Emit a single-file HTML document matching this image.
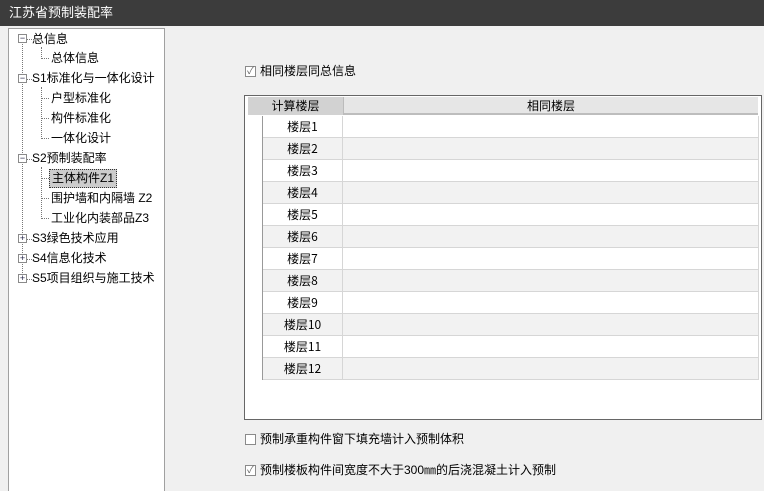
<!DOCTYPE html><html><head><meta charset="utf-8"><style>
*{margin:0;padding:0;box-sizing:border-box}
body{width:764px;height:491px;background:#f0f0f0;font-family:"Liberation Sans","Noto Sans CJK SC",sans-serif;font-size:12px;color:#000;position:relative;overflow:hidden}
.a{position:absolute}
.title{left:0;top:0;width:764px;height:26px;background:#3c3c3c;color:#fff;font-size:13px;line-height:26px;padding-left:9px}
.tree{left:8px;top:28px;width:157px;height:463px;background:#fff;border:1px solid #a0a0a0;border-bottom:none}
.t{position:absolute;white-space:nowrap;font-size:12px;line-height:16px}
.bx{position:absolute;width:9px;height:9px;border:1px solid #8a8a8a;background:#fff;font-size:9px;line-height:7px;text-align:center;color:#224}
.dv{position:absolute;border-left:1px dotted #777}
.dh{position:absolute;border-top:1px dotted #777;width:7px}
.tbl{left:244px;top:95px;width:518px;height:325px;background:#fff;border:1px solid #666}
.row{position:absolute;left:3px;width:510px;height:22px;border-bottom:1px solid #d6d6d6}
.c1{position:absolute;left:15px;width:80px;height:22px;text-align:center;line-height:22px;border-right:1px solid #d6d6d6;font-family:"WenQuanYi Zen Hei","Noto Sans CJK SC",sans-serif}
.cb{position:absolute;width:11px;height:11px;border:1px solid #8a8a8a;background:#fff;font-size:10px;line-height:9px;text-align:center;color:#666}
</style></head><body>
<div class="a title">江苏省预制装配率</div>
<div class="a tree">
<div class="dv" style="left:13px;top:12px;height:242px"></div>
<div class="dv" style="left:32px;top:18px;height:12px"></div>
<div class="dv" style="left:32px;top:58px;height:52px"></div>
<div class="dv" style="left:32px;top:138px;height:52px"></div>
<div class="bx" style="left:9px;top:5px">−</div><div class="dh" style="left:18px;top:10px"></div><div class="t" style="left:23px;top:2px">总信息</div>
<div class="dh" style="left:33px;top:29px"></div><div class="t" style="left:42px;top:21px">总体信息</div>
<div class="bx" style="left:9px;top:45px">−</div><div class="dh" style="left:18px;top:50px"></div><div class="t" style="left:23px;top:41px">S1标准化与一体化设计</div>
<div class="dh" style="left:33px;top:69px"></div><div class="t" style="left:42px;top:61px">户型标准化</div>
<div class="dh" style="left:33px;top:89px"></div><div class="t" style="left:42px;top:81px">构件标准化</div>
<div class="dh" style="left:33px;top:109px"></div><div class="t" style="left:42px;top:101px">一体化设计</div>
<div class="bx" style="left:9px;top:125px">−</div><div class="dh" style="left:18px;top:130px"></div><div class="t" style="left:23px;top:121px">S2预制装配率</div>
<div class="dh" style="left:33px;top:149px"></div><div class="t" style="left:40px;top:140px;background:#ccc;border:1px dotted #333;padding:0 2px;height:19px;line-height:17px">主体构件Z1</div>
<div class="dh" style="left:33px;top:169px"></div><div class="t" style="left:42px;top:161px">围护墙和内隔墙 Z2</div>
<div class="dh" style="left:33px;top:189px"></div><div class="t" style="left:42px;top:181px">工业化内装部品Z3</div>
<div class="bx" style="left:9px;top:205px">+</div><div class="dh" style="left:18px;top:210px"></div><div class="t" style="left:23px;top:201px">S3绿色技术应用</div>
<div class="bx" style="left:9px;top:225px">+</div><div class="dh" style="left:18px;top:230px"></div><div class="t" style="left:23px;top:221px">S4信息化技术</div>
<div class="bx" style="left:9px;top:245px">+</div><div class="dh" style="left:18px;top:250px"></div><div class="t" style="left:23px;top:241px">S5项目组织与施工技术</div>
</div>
<div class="cb" style="left:245px;top:66px">✓</div><div class="a" style="left:260px;top:63px;line-height:16px">相同楼层同总信息</div>
<div class="a tbl">
<div class="a" style="left:3px;top:1px;width:510px;height:18px;background:#e6e6e6;border-bottom:2px solid #bdbdbd"></div>
<div class="a" style="left:3px;top:1px;width:95px;height:18px;background:#d2d2d2;text-align:center;line-height:18px">计算楼层</div>
<div class="a" style="left:98px;top:1px;width:415px;height:18px;text-align:center;line-height:18px;border-left:1px solid #bbb">相同楼层</div>
<div class="row" style="top:20px;background:#fff"><div class="c1">楼层1</div></div>
<div class="row" style="top:42px;background:#f2f2f2"><div class="c1">楼层2</div></div>
<div class="row" style="top:64px;background:#fff"><div class="c1">楼层3</div></div>
<div class="row" style="top:86px;background:#f2f2f2"><div class="c1">楼层4</div></div>
<div class="row" style="top:108px;background:#fff"><div class="c1">楼层5</div></div>
<div class="row" style="top:130px;background:#f2f2f2"><div class="c1">楼层6</div></div>
<div class="row" style="top:152px;background:#fff"><div class="c1">楼层7</div></div>
<div class="row" style="top:174px;background:#f2f2f2"><div class="c1">楼层8</div></div>
<div class="row" style="top:196px;background:#fff"><div class="c1">楼层9</div></div>
<div class="row" style="top:218px;background:#f2f2f2"><div class="c1">楼层10</div></div>
<div class="row" style="top:240px;background:#fff"><div class="c1">楼层11</div></div>
<div class="row" style="top:262px;background:#f2f2f2"><div class="c1">楼层12</div></div>
<div class="a" style="left:3px;top:20px;width:15px;height:264px;background:#fff;border-right:1px solid #999"></div>
<div class="a" style="left:513px;top:20px;height:264px;border-left:1px solid #d6d6d6"></div>
</div>
<div class="cb" style="left:245px;top:434px"></div><div class="a" style="left:260px;top:431px;line-height:16px">预制承重构件窗下填充墙计入预制体积</div>
<div class="cb" style="left:245px;top:465px">✓</div><div class="a" style="left:260px;top:462px;line-height:16px">预制楼板构件间宽度不大于300㎜的后浇混凝土计入预制</div>
</body></html>
